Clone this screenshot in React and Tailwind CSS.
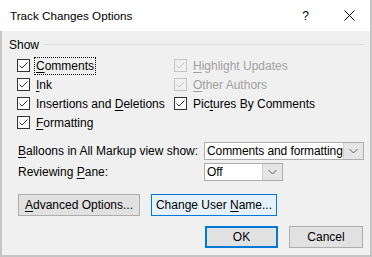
import React from "react";

const font = { fontFamily: '"Liberation Sans", Arial, sans-serif' };

function Check({ disabled }) {
  const c = disabled ? "#c4c4c4" : "#333333";
  return (
    <svg width="13" height="13" viewBox="0 0 13 13" className="shrink-0">
      <rect x="0.5" y="0.5" width="12" height="12" fill={disabled ? "#f0f0f0" : "#ffffff"} stroke={c} />
      <path d="M2.5 6.5 L5 9 L10.5 3.5" fill="none" stroke={c} strokeWidth="1" />
    </svg>
  );
}

function U({ children }) {
  return <span className="underline underline-offset-[2px] decoration-1">{children}</span>;
}

function CheckRow({ disabled, focus, children }) {
  return (
    <div className="flex items-center h-[19px]">
      <Check disabled={disabled} />
      <span
        className={
          "ml-[6px] text-[12px] leading-[14px] whitespace-nowrap " +
          (disabled ? "text-[#a0a0a0] " : "text-black ") +
          (focus ? "outline outline-1 outline-dotted outline-black outline-offset-[1px]" : "")
        }
      >
        {children}
      </span>
    </div>
  );
}

function Chevron() {
  return (
    <svg width="9" height="6" viewBox="0 0 9 6">
      <path d="M0.5 1 L4.5 5 L8.5 1" fill="none" stroke="#606060" strokeWidth="1" />
    </svg>
  );
}

function Select({ width, text }) {
  return (
    <div className={"flex h-[18px] border border-[#adadad] bg-white " + width}>
      <div className="flex-1 min-w-0 overflow-hidden whitespace-nowrap flex items-center pl-[2px] text-[12px] tracking-[-0.1px] text-black">
        {text}
      </div>
      <div className="w-[20px] shrink-0 flex items-center justify-center bg-[#e5e5e5] border-l border-[#cfcfcf]">
        <Chevron />
      </div>
    </div>
  );
}

export default function App() {
  return (
    <div className="w-[372px] h-[257px] flex flex-col bg-[#f0f0f0] text-black" style={font}>
      <div className="h-[31px] bg-white flex items-center shrink-0 border-r-2 border-[#c4c4c4]">
        <div className="pl-[10px] text-[11.7px] flex-1 whitespace-nowrap">Track Changes Options</div>
        <div className="text-[12px] mr-[35px]">?</div>
        <svg width="11" height="11" viewBox="0 0 11 11" className="mr-[15px]">
          <path d="M0.5 0.5 L10.5 10.5 M10.5 0.5 L0.5 10.5" stroke="#000" strokeWidth="1" />
        </svg>
      </div>
      <div className="flex-1 flex flex-col border-x-2 border-b-2 border-[#c4c4c4]">
        <div className="flex items-center mt-[6px] pl-[7px] pr-[6px] h-[16px]">
          <span className="text-[12px]">Show</span>
          <div className="flex-1 h-px bg-[#dcdcdc] ml-[5px] mt-[-2px]" />
        </div>
        <div className="flex mt-[3px] pl-[15px]">
          <div className="flex flex-col w-[157px]">
            <CheckRow focus><U>C</U>omments</CheckRow>
            <CheckRow><U>I</U>nk</CheckRow>
            <CheckRow>Insertions and <U>D</U>eletions</CheckRow>
            <CheckRow><U>F</U>ormatting</CheckRow>
          </div>
          <div className="flex flex-col">
            <CheckRow disabled><U>H</U>ighlight Updates</CheckRow>
            <CheckRow disabled><U>O</U>ther Authors</CheckRow>
            <CheckRow>Pic<U>t</U>ures By Comments</CheckRow>
          </div>
        </div>
        <div className="flex items-center mt-[10px] pl-[16px]">
          <span className="text-[12px] w-[186px] whitespace-nowrap"><U>B</U>alloons in All Markup view show:</span>
          <Select width="w-[160px]" text="Comments and formatting" />
        </div>
        <div className="flex items-center mt-[3px] pl-[16px]">
          <span className="text-[12px] w-[186px]">Reviewing <U>P</U>ane:</span>
          <Select width="w-[79px]" text="Off" />
        </div>
        <div className="flex mt-[13px] pl-[16px] gap-[11px]">
          <div className="w-[122px] h-[22px] flex items-center justify-center border border-[#adadad] bg-[#e1e1e1] text-[12px]">
            <span><U>A</U>dvanced Options...</span>
          </div>
          <div className="w-[126px] h-[22px] flex items-center justify-center border border-[#0078d7] bg-[#e5f1fb] text-[12px]">
            <span>Change User <U>N</U>ame...</span>
          </div>
        </div>
        <div className="flex justify-end mt-[10px] pr-[7px] gap-[11px]">
          <div className="w-[73px] h-[22px] flex items-center justify-center border-2 border-[#0078d7] bg-[#e1e1e1] text-[12px]">
            OK
          </div>
          <div className="w-[74px] h-[22px] flex items-center justify-center border border-[#adadad] bg-[#e1e1e1] text-[12px]">
            Cancel
          </div>
        </div>
      </div>
    </div>
  );
}
